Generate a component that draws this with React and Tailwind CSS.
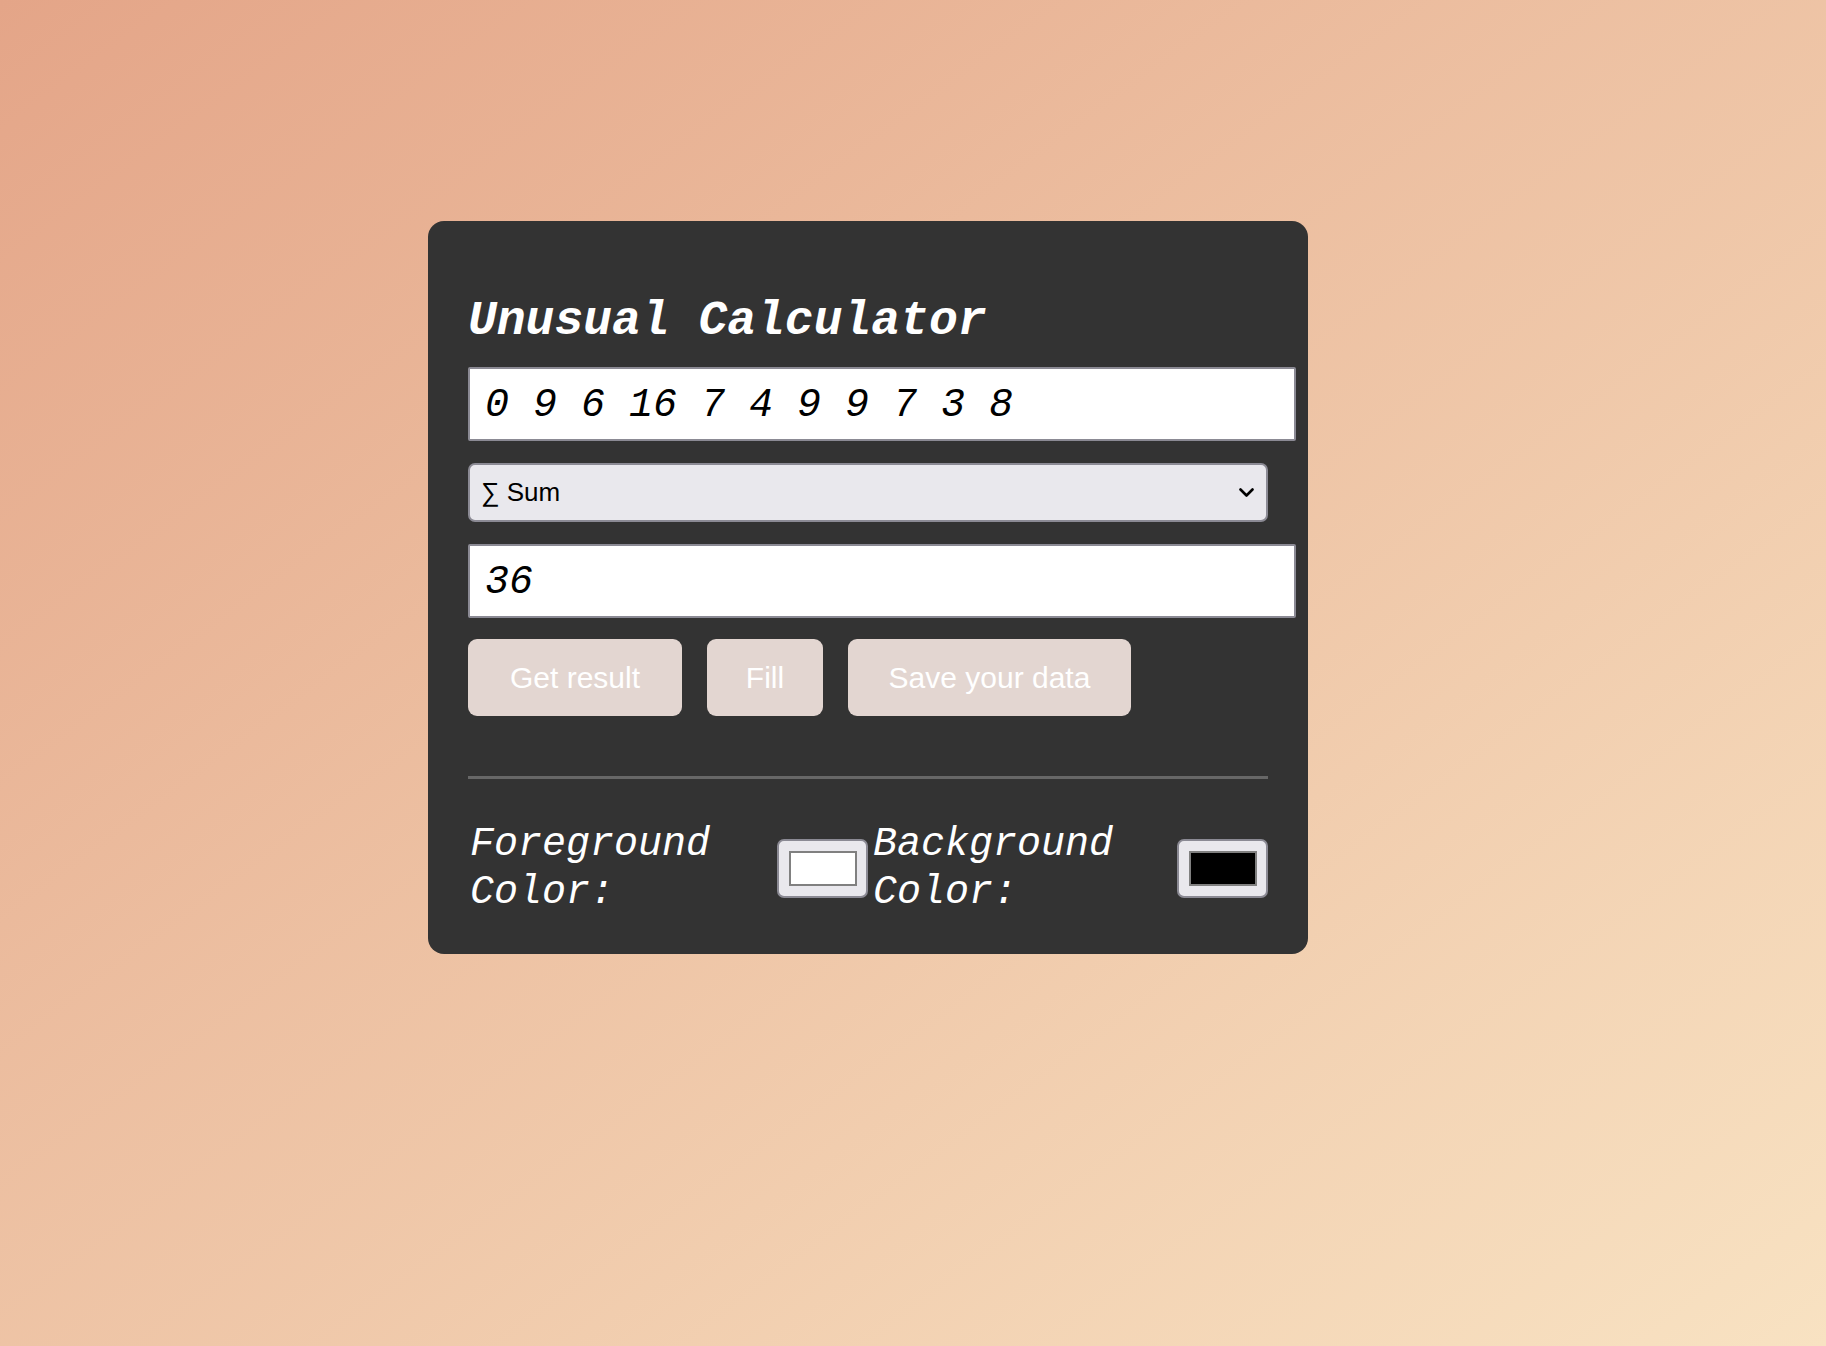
import { useState } from 'react'

const mono = { fontFamily: '"Liberation Mono", "Courier New", monospace' }
const sans = { fontFamily: '"Liberation Sans", Arial, sans-serif' }

const ColorPicker = ({ label, value }) => {
  return (
    <div className="flex items-center">
      <label className="flex-1 min-w-0 pl-[2px] text-[40px] leading-[47.5px] italic text-white" style={mono}>
        {label}
      </label>
      {/* native color input look: grey well with a bordered swatch */}
      <div className="w-[91px] h-[59px] shrink-0 rounded-[7px] border-2 border-[#8b8a94] bg-[#e9e8ed] flex items-center justify-center">
        <div className="w-[68px] h-[35px] border-2 border-[#808080]" style={{ backgroundColor: value }} />
      </div>
    </div>
  )
}

const buttons = [
  { label: 'Get result', w: 'w-[214px]' },
  { label: 'Fill', w: 'w-[116px]' },
  { label: 'Save your data', w: 'w-[283px]' },
]

const App = () => {
  const [numbers, setNumbers] = useState('0 9 6 16 7 4 9 9 7 3 8')
  const [result, setResult] = useState('36')
  const [op, setOp] = useState('sum')

  return (
    <div className="min-h-screen bg-linear-to-br/srgb from-[#e4a588] to-[#f8e2c2] pt-[221px] pl-[428px]">
      <div className="w-[880px] bg-[#333333] rounded-[16px] px-[40px] pt-[40px] pb-[38px]">
        <h1
          className="mt-[33px] mb-[19px] text-[48px] leading-[54px] font-bold italic text-white"
          style={mono}
        >
          Unusual Calculator
        </h1>

        <input
          type="text"
          value={numbers}
          onChange={(e) => setNumbers(e.target.value)}
          className="block w-[828px] h-[74px] pl-[15px] pr-[12px] pt-[2px] border-2 border-[#8b8a94] rounded-[2px] bg-white text-black text-[40px] italic outline-none"
          style={mono}
        />

        <div className="relative mt-[22px] w-[800px]">
          <select
            value={op}
            onChange={(e) => setOp(e.target.value)}
            className="appearance-none block w-full h-[59px] pl-[11px] pr-[40px] border-2 border-[#8b8a94] rounded-[7px] bg-[#e9e8ed] text-black text-[26px] outline-none"
            style={sans}
          >
            <option value="sum">∑ Sum</option>
            <option value="avg">x̄ Average</option>
            <option value="max">↑ Max</option>
            <option value="min">↓ Min</option>
          </select>
          <svg
            className="pointer-events-none absolute right-[14px] top-[25px]"
            width="15"
            height="10"
            viewBox="0 0 15 10"
            fill="none"
          >
            <polyline points="1.5,1.5 7.5,7.5 13.5,1.5" stroke="#000" strokeWidth="2.6" strokeLinecap="round" strokeLinejoin="round" />
          </svg>
        </div>

        <input
          type="text"
          value={result}
          onChange={(e) => setResult(e.target.value)}
          className="block mt-[22px] w-[828px] h-[74px] pl-[15px] pr-[12px] pt-[2px] border-2 border-[#8b8a94] rounded-[2px] bg-white text-black text-[40px] italic outline-none"
          style={mono}
        />

        <div className="flex gap-[25px] mt-[21px]">
          {buttons.map((b) => (
            <button
              key={b.label}
              className={`${b.w} h-[77px] rounded-[9px] bg-[#e3d6d1] text-white text-[30px]`}
              style={sans}
            >
              {b.label}
            </button>
          ))}
        </div>

        <hr className="mt-[60px] w-[800px] h-[3px] border-0 bg-[#676767]" />

        <div className="grid grid-cols-2 w-[800px] mt-[42px]">
          <ColorPicker label="Foreground Color:" value="#ffffff" />
          <div className="pl-[3px]">
            <ColorPicker label="Background Color:" value="#000000" />
          </div>
        </div>
      </div>
    </div>
  )
}

export default App
